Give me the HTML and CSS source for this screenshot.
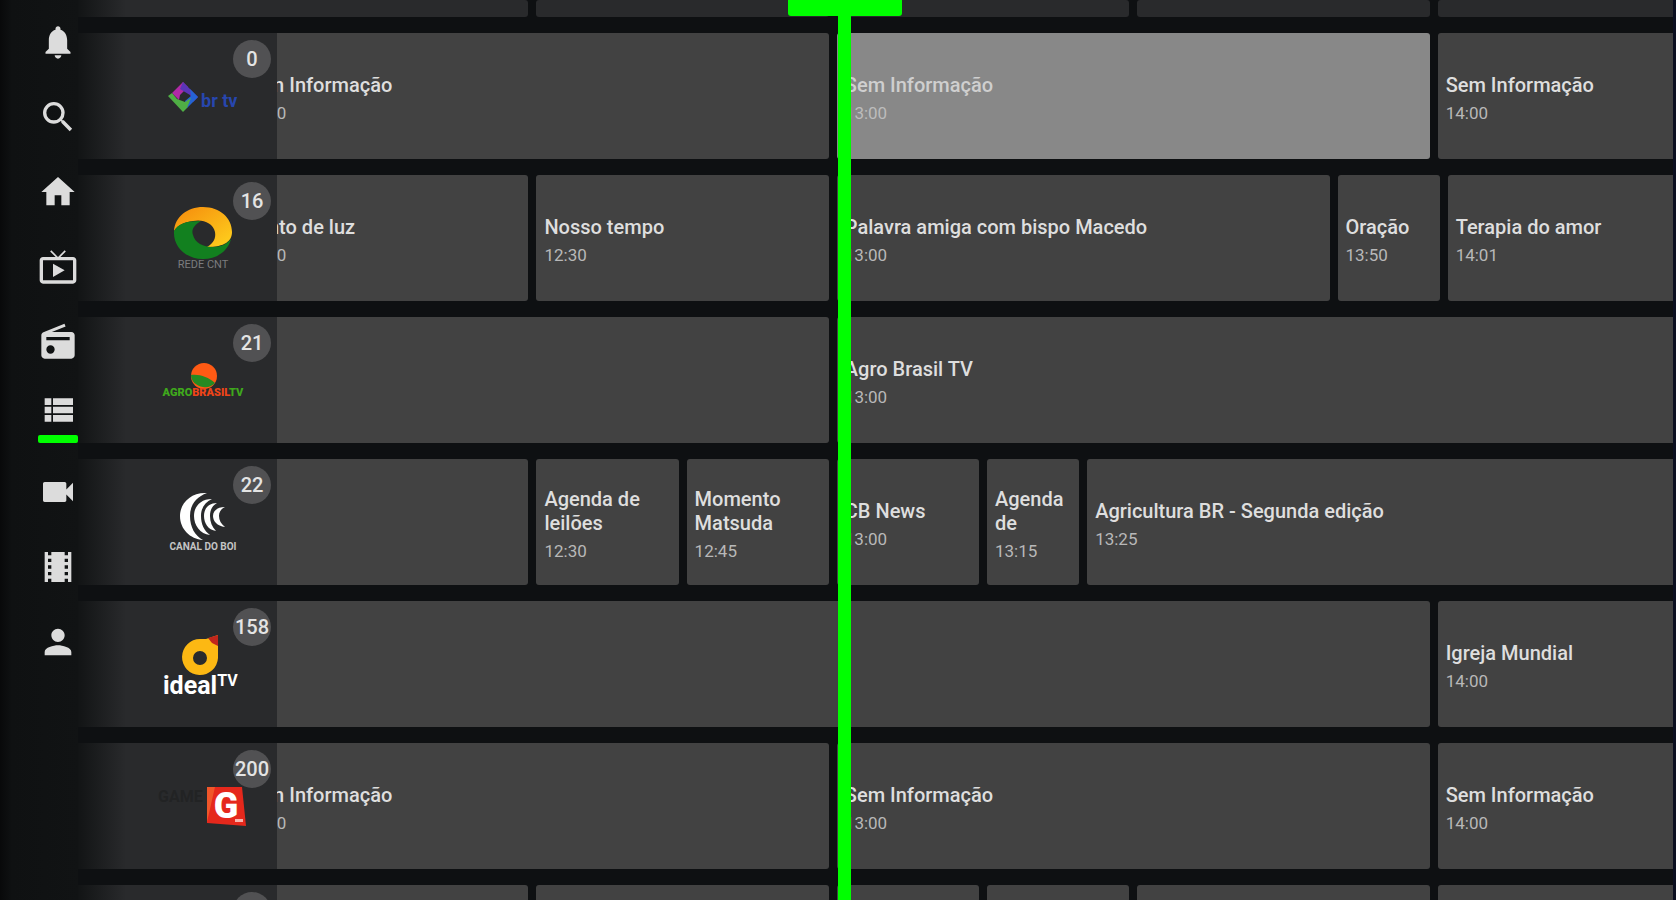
FILE: index.html
```html
<!doctype html>
<html lang="pt-BR">
<head>
    <meta charset="UTF-8">
    <meta name="viewport" content="width=device-width, initial-scale=1.0">
    <title>Guia de TV</title>
    <link rel="stylesheet" href="styles.css">
</head>
<body>
<div class="app">
    <nav class="sidebar">
        <a href="#" aria-label="Notificações"><svg viewBox="0 0 24 24"><path d="M12 22c1.100 0 2-.9 2-2h-4c0 1.100.9 2 2 2zm5.500-6v-5c0-3.070-1.500-5.640-4-6.320V4c0-.83-.67-1.500-1.500-1.500s-1.500.67-1.500 1.500v.68C7.900 5.360 6.500 7.920 6.500 11v5l-2 2v1h15v-1l-2-2z"/></svg></a>
        <a href="#" aria-label="Buscar"><svg viewBox="0 0 24 24"><path d="M15.500 14h-.79l-.28-.27A6.470 6.470 0 0 0 16 9.500 6.500 6.500 0 1 0 9.500 16c1.610 0 3.090-.59 4.230-1.570l.27.28v.79l5 4.990L20.490 19l-4.990-5zm-6 0a4.500 4.500 0 1 1 0-9 4.500 4.500 0 0 1 0 9z"/></svg></a>
        <a href="#" aria-label="Início"><svg viewBox="0 0 24 24"><path d="M10 20v-6h4v6h5v-8h3L12 3 2 12h3v8z"/></svg></a>
        <a href="#" aria-label="TV ao vivo"><svg viewBox="0 0 24 24"><path d="M21 6h-7.590l3.290-3.290L16 2l-4 4-4-4-.71.71L10.590 6H3c-1.100 0-2 .89-2 2v12c0 1.100.9 2 2 2h18c1.100 0 2-.9 2-2V8c0-1.110-.9-2-2-2zm0 14H3V8h18v12zM9 10v8l7-4z"/></svg></a>
        <a href="#" aria-label="Rádio"><svg viewBox="0 0 24 24"><path d="M3.240 6.150C2.510 6.430 2 7.170 2 8v12c0 1.100.89 2 2 2h16c1.110 0 2-.9 2-2V8c0-1.110-.89-2-2-2H8.300l8.260-3.340L15.880 1 3.240 6.150zM7.500 19a2.500 2.500 0 1 1 0-5 2.500 2.500 0 0 1 0 5zM19 11H5V9h14v2z"/></svg></a>
        <a href="#" class="active" aria-label="Guia"><svg viewBox="0 0 24 24"><path d="M4 14h4v-4H4v4zm0 5h4v-4H4v4zM4 9h4V5H4v4zm5 5h12v-4H9v4zm0 5h12v-4H9v4zM9 5v4h12V5H9z"/></svg></a>
        <a href="#" aria-label="Vídeos"><svg viewBox="0 0 24 24"><path d="M17 10.500V7c0-.55-.45-1-1-1H4c-.55 0-1 .45-1 1v10c0 .55.45 1 1 1h12c.55 0 1-.45 1-1v-3.500l4 4v-11l-4 4z"/></svg></a>
        <a href="#" aria-label="Filmes"><svg viewBox="0 0 24 24"><path d="M18 3v2h-2V3H8v2H6V3H4v18h2v-2h2v2h8v-2h2v2h2V3h-2zM8 17H6v-2h2v2zm0-4H6v-2h2v2zm0-4H6V7h2v2zm10 8h-2v-2h2v2zm0-4h-2v-2h2v2zm0-4h-2V7h2v2z"/></svg></a>
        <a href="#" aria-label="Perfil"><svg viewBox="0 0 24 24"><path d="M12 12c2.210 0 4-1.790 4-4s-1.790-4-4-4-4 1.790-4 4 1.790 4 4 4zm0 2c-2.670 0-8 1.340-8 4v2h16v-2c0-2.660-5.330-4-8-4z"/></svg></a>
    </nav>

    <main class="guide">
        <!-- Time header -->
        <div class="row header">
            <div class="channel"></div>
            <div class="track">
                <div class="slot" style="--min: 30"></div>
                <div class="slot" style="--min: 30"></div>
                <div class="slot" style="--min: 30"></div>
                <div class="slot" style="--min: 30"></div>
                <div class="slot last"></div>
            </div>
        </div>

        <div class="row">
            <div class="channel">
                <svg class="logo" viewBox="0 0 100 100">
                    <path d="M19 47 30 36l5 5-8 8-1 5z" fill="#b02aa6"/>
                    <path d="m30 36 15 15-5 5-3-7-10-6z" fill="#5a35b8"/>
                    <path d="m37 43 8 8-11 11-2-7 6-5z" fill="#2563d4"/>
                    <path d="M34 62l-4 4-15-16 4-3 5 6 8 3 6-4z" fill="#4fae45"/>
                    <text x="48" y="61" font-size="18" font-weight="700" fill="#2746ae">br tv</text>
                </svg>
                <span class="badge">0</span>
            </div>
            <div class="track">
                <button class="show" style="--min: 60"><b>Sem Informação</b><time>12:00</time></button>
                <button class="show focused" style="--min: 60"><b>Sem Informação</b><time>13:00</time></button>
                <button class="show last"><b>Sem Informação</b><time>14:00</time></button>
            </div>
        </div>

        <div class="row">
            <div class="channel">
                <svg class="logo" viewBox="0 0 100 100">
                    <defs>
                        <linearGradient id="cntGold" x1="0" y1="0" x2="1" y2="1"><stop offset="0" stop-color="#f58a0c"/><stop offset="1" stop-color="#ffd21e"/></linearGradient>
                    </defs>
                    <path d="M21 43C22 29 34 19 50 19c17 0 29 11 29 25 0 9-7 15-25 15 7-4 9-9 8-15-2-9-12-13-22-11-9 1-15 4-19 10z" fill="url(#cntGold)"/>
                    <path d="M21 43c4-7 11-10 27-10-7 4-10 9-8 14 2 8 10 12 20 12 8 0 14-3 18-8-3 12-14 20-28 20-17 0-30-12-29-28z" fill="#12801f"/>
                    <text x="50" y="80" font-size="11" text-anchor="middle" fill="#7b7c7e">REDE CNT</text>
                </svg>
                <span class="badge">16</span>
            </div>
            <div class="track">
                <button class="show" style="--min: 30"><b>Ponto de luz</b><time>12:00</time></button>
                <button class="show" style="--min: 30"><b>Nosso tempo</b><time>12:30</time></button>
                <button class="show" style="--min: 50"><b>Palavra amiga com bispo Macedo</b><time>13:00</time></button>
                <button class="show" style="--min: 11"><b>Oração</b><time>13:50</time></button>
                <button class="show last"><b>Terapia do amor</b><time>14:01</time></button>
            </div>
        </div>

        <div class="row">
            <div class="channel">
                <svg class="logo" viewBox="0 0 100 100">
                    <circle cx="51" cy="46" r="13" fill="#ff5a14"/>
                    <path d="M38 45c9-1 17 2 24 8-4 4-8 5-12 4-7-1-12-6-12-12z" fill="#268a22"/>
                    <text x="50" y="66" font-size="11" font-weight="900" text-anchor="middle" fill="#3fa81c">AGRO<tspan fill="#ee4418">BRASIL</tspan>TV</text>
                </svg>
                <span class="badge">21</span>
            </div>
            <div class="track">
                <button class="show" style="--min: 60" aria-label="Sem título"></button>
                <button class="show last"><b>Agro Brasil TV</b><time>13:00</time></button>
            </div>
        </div>

        <div class="row">
            <div class="channel">
                <svg class="logo" viewBox="0 0 100 100" fill="#fff">
                    <path d="M54 21C38 20 27 31 27 44s10 23 23 24c-8-4-13-13-13-24s6-19 17-23z"/>
                    <path d="M59 27c-12 0-18 8-18 17s6 18 16 19c-6-4-9-11-9-19s4-14 11-17z"/>
                    <path d="M64 31c-9 0-13 6-13 13s4 14 12 15c-4-4-6-9-6-15s2-10 7-13z"/>
                    <path d="M72 35c-8 0-12 4-12 9s4 10 12 11c-4-3-6-7-6-11s2-7 6-9z"/>
                    <text x="50" y="78" font-size="10" font-weight="700" text-anchor="middle" fill="#c4c4c4">CANAL DO BOI</text>
                </svg>
                <span class="badge">22</span>
            </div>
            <div class="track">
                <button class="show" style="--min: 30" aria-label="Sem título"></button>
                <button class="show" style="--min: 15"><b>Agenda de leilões</b><time>12:30</time></button>
                <button class="show" style="--min: 15"><b>Momento Matsuda</b><time>12:45</time></button>
                <button class="show" style="--min: 15"><b>CB News</b><time>13:00</time></button>
                <button class="show" style="--min: 10"><b>Agenda de</b><time>13:15</time></button>
                <button class="show last"><b>Agricultura BR - Segunda edição</b><time>13:25</time></button>
            </div>
        </div>

        <div class="row">
            <div class="channel">
                <svg class="logo" viewBox="0 0 100 100">
                    <path d="M47 25h6l12-4v23a18 18 0 1 1-18-19zm0 12a7 7 0 1 0 0 14 7 7 0 0 0 0-14z" fill="#fcb813"/>
                    <path d="m55 24 10-3v11l-6-3z" fill="#c0261c"/>
                    <text x="10" y="80" font-size="25" font-weight="700" fill="#fff">ideal<tspan font-size="16" dy="-8">TV</tspan></text>
                </svg>
                <span class="badge">158</span>
            </div>
            <div class="track">
                <button class="show" style="--min: 120" aria-label="Sem título"></button>
                <button class="show last"><b>Igreja Mundial</b><time>14:00</time></button>
            </div>
        </div>

        <div class="row">
            <div class="channel">
                <svg class="logo" viewBox="0 0 100 100">
                    <text x="5" y="46" font-size="16" font-weight="700" fill="#222324">GAME</text>
                    <path d="M54 31h35l4 39-39-3z" fill="#e5281c"/>
                    <path d="M54 31h8L54 66z" fill="#f0562a"/>
                    <text x="73" y="62" font-size="36" font-weight="900" text-anchor="middle" fill="#fff">G</text>
                    <path d="M82 63h8v3h-8z" fill="#f7b5ae"/>
                </svg>
                <span class="badge">200</span>
            </div>
            <div class="track">
                <button class="show" style="--min: 60"><b>Sem Informação</b><time>12:00</time></button>
                <button class="show" style="--min: 60"><b>Sem Informação</b><time>13:00</time></button>
                <button class="show last"><b>Sem Informação</b><time>14:00</time></button>
            </div>
        </div>

        <div class="row">
            <div class="channel"><span class="badge"></span></div>
            <div class="track">
                <button class="show" style="--min: 30" aria-label="Sem título"></button>
                <button class="show" style="--min: 30" aria-label="Sem título"></button>
                <button class="show" style="--min: 15" aria-label="Sem título"></button>
                <button class="show" style="--min: 15" aria-label="Sem título"></button>
                <button class="show" style="--min: 30" aria-label="Sem título"></button>
                <button class="show last" aria-label="Sem título"></button>
            </div>
        </div>

        <!-- Current time -->
        <div class="now" style="--now: 0.4234"></div>
    </main>
</div>
</body>
</html>
```
FILE: styles.css
```css
/* Global Styles */
* {
    box-sizing: border-box;
}

body {
    font-family: Roboto, "Liberation Sans", sans-serif;
    background: #0e1012;
    margin: 0;
    color: #dedede;
}

.app {
    display: flex;
    height: 100vh;
    overflow: hidden;
    border-right: 3px solid #0b0f20;
}

/* Sidebar */
.sidebar {
    flex: 0 0 78px;
    padding: 4px 0 0 38px;
    background: linear-gradient(to right, #08090a 0, #0f1112 12px, #111314 100%);
}

.sidebar a {
    display: flex;
    flex-direction: column;
    align-items: center;
    justify-content: center;
    gap: 5px;
    width: 40px;
    height: 75px;
}

.sidebar svg {
    width: 40px;
    height: 40px;
    fill: #dcdcdc;
}

.sidebar .active::after {
    content: "";
    width: 40px;
    height: 8px;
    border-radius: 2px;
    background: #00ff00;
}

/* Guide */
.guide {
    position: relative;
    flex: 1;
    min-width: 0;
    display: flex;
    flex-direction: column;
    gap: 16px;
    overflow: hidden;
}

.row {
    display: flex;
    flex: 0 0 126px;
}

.row.header {
    flex-basis: 17px;
}

/* The channel column covers the start of the timeline */
.channel {
    position: relative;
    z-index: 1;
    flex: 0 0 199px;
    margin-right: -41px;
    padding-left: 50px;
    display: flex;
    align-items: center;
    justify-content: center;
    background: linear-gradient(to right, #121415 0, #292a2c 48px);
}

.logo {
    width: 100px;
    height: 100px;
}

.badge {
    position: absolute;
    top: 7px;
    right: 6px;
    width: 38px;
    height: 38px;
    border-radius: 50%;
    background: #515153;
    color: #e4e4e4;
    font-size: 20px;
    font-weight: 500;
    line-height: 38px;
    text-align: center;
}

.track {
    flex: 1;
    min-width: 0;
    display: flex;
    overflow: hidden;
}

.show,
.slot {
    flex: none;
    width: calc(var(--min) / 143.5 * 100% - 8px);
    margin-right: 8px;
    border-radius: 3px;
}

.show.last,
.slot.last {
    flex: 1;
    margin-right: 0;
    border-radius: 3px 0 0 3px;
}

.slot {
    background: #292a2c;
}

.show {
    display: flex;
    flex-direction: column;
    justify-content: center;
    gap: 6px;
    padding: 4px 8px 0;
    border: none;
    background: #424242;
    color: #dedede;
    font-family: inherit;
    text-align: left;
    cursor: pointer;
}

.show b {
    font-size: 20px;
    font-weight: 500;
    line-height: 24px;
}

.show time {
    color: #b8b8b8;
    font-size: 17px;
    line-height: 20px;
}

.show.focused {
    background: #888;
    color: #cfcfcf;
}

.show.focused time {
    color: #bcbcbc;
}

/* Current time marker */
.now {
    position: absolute;
    z-index: 2;
    top: 0;
    bottom: 0;
    left: calc(158px + (100% - 158px) * var(--now));
    width: 13px;
    margin-left: -6px;
    background: #00ff00;
}

.now::before {
    content: "";
    position: absolute;
    top: 0;
    left: 50%;
    width: 114px;
    height: 16px;
    margin-left: -57px;
    border-radius: 0 0 3px 3px;
    background: #00ff00;
}
```
